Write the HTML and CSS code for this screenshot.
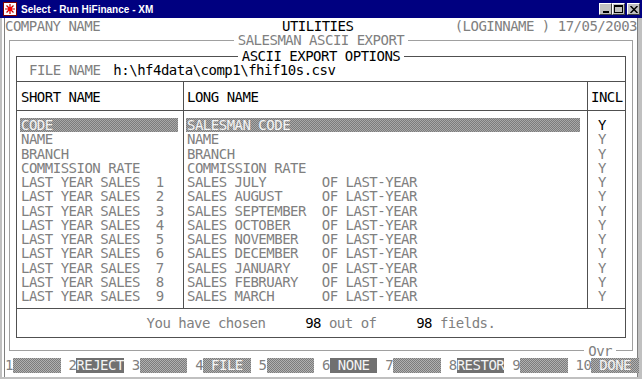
FILE: index.html
```html
<!DOCTYPE html>
<html lang="en">
<head>
  <meta charset="UTF-8">
  <title>Select - Run HiFinance - XM</title>
  <link rel="stylesheet" href="styles.css">
</head>
<body>
  <div class="window">
    <!-- Barre de titre -->
    <div class="titlebar">
      <svg class="app-icon" width="14" height="14" viewBox="0 0 14 14">
        <rect x="0.5" y="0.5" width="13" height="13" fill="#fff" stroke="#800000"/>
        <path d="M7 2v10M2 7h10M3.5 3.5l7 7M10.5 3.5l-7 7" stroke="#c00000" stroke-width="1.2"/>
        <rect x="5" y="5" width="4" height="4" fill="#ff0000"/>
      </svg>
      <span class="title">Select - Run HiFinance - XM</span>
      <div class="controls">
        <span class="ctl"><svg width="8" height="7" viewBox="0 0 8 7"><rect x="1" y="5" width="6" height="2" fill="#000"/></svg></span>
        <span class="ctl"><svg width="9" height="8" viewBox="0 0 9 8"><rect x="0.5" y="0.5" width="8" height="7" fill="none" stroke="#000"/><rect x="0" y="0" width="9" height="2" fill="#000"/></svg></span>
        <span class="ctl ctl-close"><svg width="8" height="7" viewBox="0 0 8 7"><path d="M0.5 0l7 7M7.5 0l-7 7" stroke="#000" stroke-width="1.5"/></svg></span>
      </div>
    </div>

    <!-- Ecran terminal -->
    <div class="screen">
      <div class="topline">
        <span class="dim">COMPANY NAME</span>
        <span class="ink">UTILITIES</span>
        <span class="dim right">(LOGINNAME ) 17/05/2003</span>
      </div>

      <fieldset class="outer">
        <legend class="dim">SALESMAN ASCII EXPORT</legend>

        <fieldset class="inner">
          <legend class="ink">ASCII EXPORT OPTIONS</legend>

          <div class="file-row">
            <span class="dim">FILE NAME</span>
            <span class="ink file-path">h:\hf4data\comp1\fhif10s.csv</span>
          </div>

          <div class="cols">
            <div class="col col-short">
              <div class="col-head ink">SHORT NAME</div>
              <div class="col-body dim">
                <div class="cell sel">CODE</div>
                <div class="cell">NAME</div>
                <div class="cell">BRANCH</div>
                <div class="cell">COMMISSION RATE</div>
                <div class="cell">LAST YEAR SALES  1</div>
                <div class="cell">LAST YEAR SALES  2</div>
                <div class="cell">LAST YEAR SALES  3</div>
                <div class="cell">LAST YEAR SALES  4</div>
                <div class="cell">LAST YEAR SALES  5</div>
                <div class="cell">LAST YEAR SALES  6</div>
                <div class="cell">LAST YEAR SALES  7</div>
                <div class="cell">LAST YEAR SALES  8</div>
                <div class="cell">LAST YEAR SALES  9</div>
              </div>
            </div>
            <div class="col col-long">
              <div class="col-head ink">LONG NAME</div>
              <div class="col-body dim">
                <div class="cell sel">SALESMAN CODE</div>
                <div class="cell">NAME</div>
                <div class="cell">BRANCH</div>
                <div class="cell">COMMISSION RATE</div>
                <div class="cell">SALES JULY       OF LAST-YEAR</div>
                <div class="cell">SALES AUGUST     OF LAST-YEAR</div>
                <div class="cell">SALES SEPTEMBER  OF LAST-YEAR</div>
                <div class="cell">SALES OCTOBER    OF LAST-YEAR</div>
                <div class="cell">SALES NOVEMBER   OF LAST-YEAR</div>
                <div class="cell">SALES DECEMBER   OF LAST-YEAR</div>
                <div class="cell">SALES JANUARY    OF LAST-YEAR</div>
                <div class="cell">SALES FEBRUARY   OF LAST-YEAR</div>
                <div class="cell">SALES MARCH      OF LAST-YEAR</div>
              </div>
            </div>
            <div class="col col-incl">
              <div class="col-head ink">INCL</div>
              <div class="col-body">
                <div class="cell ink"> Y</div>
                <div class="cell dim"> Y</div>
                <div class="cell dim"> Y</div>
                <div class="cell dim"> Y</div>
                <div class="cell dim"> Y</div>
                <div class="cell dim"> Y</div>
                <div class="cell dim"> Y</div>
                <div class="cell dim"> Y</div>
                <div class="cell dim"> Y</div>
                <div class="cell dim"> Y</div>
                <div class="cell dim"> Y</div>
                <div class="cell dim"> Y</div>
                <div class="cell dim"> Y</div>
              </div>
            </div>
          </div>

          <div class="summary"><span class="dim">You have chosen     </span><span class="ink">98</span><span class="dim"> out of     </span><span class="ink">98</span><span class="dim"> fields.</span></div>
        </fieldset>

        <span class="ovr dim">Ovr</span>
      </fieldset>

      <!-- Touches de fonction -->
      <div class="fkeys">
        <div class="fkey"><span class="num">1</span><span class="lbl">      </span></div>
        <div class="fkey"><span class="num">2</span><span class="lbl on">REJECT</span></div>
        <div class="fkey"><span class="num">3</span><span class="lbl">      </span></div>
        <div class="fkey"><span class="num">4</span><span class="lbl"> FILE </span></div>
        <div class="fkey"><span class="num">5</span><span class="lbl">      </span></div>
        <div class="fkey"><span class="num">6</span><span class="lbl on"> NONE </span></div>
        <div class="fkey"><span class="num">7</span><span class="lbl">      </span></div>
        <div class="fkey"><span class="num">8</span><span class="lbl on">RESTOR</span></div>
        <div class="fkey"><span class="num">9</span><span class="lbl">      </span></div>
        <div class="fkey"><span class="num">10</span><span class="lbl"> DONE </span></div>
      </div>
    </div>
  </div>
</body>
</html>
```

FILE: styles.css
```css
/* Style global */
body, html {
  margin: 0;
  padding: 0;
  background: #c0c0c0;
  overflow: hidden;
}

.window {
  width: 642px;
  height: 379px;
  background: #c0c0c0;
  display: flex;
  flex-direction: column;
}

/* Barre de titre */
.titlebar {
  height: 18px;
  background: #000080;
  display: flex;
  align-items: center;
  padding: 0 2px 0 3px;
  box-sizing: border-box;
}

.app-icon {
  margin-right: 4px;
}

.title {
  color: #fff;
  font-family: "Liberation Sans", Arial, sans-serif;
  font-weight: bold;
  font-size: 10px;
  flex: 1;
}

.controls {
  display: flex;
}

.ctl {
  width: 13px;
  height: 12px;
  background: #c0c0c0;
  border: 1px solid;
  border-color: #fff #404040 #404040 #fff;
  display: flex;
  align-items: center;
  justify-content: center;
  box-sizing: border-box;
}

.ctl-close {
  margin-left: 2px;
}

/* Ecran */
.screen {
  flex: 1;
  margin: 0 5px 2px 5px;
  background: #fff;
  font-family: "DejaVu Sans Mono", monospace;
  font-size: 14px;
  letter-spacing: -0.5px;
  line-height: 14px;
  color: #000;
  box-shadow: -1px 0 0 #808080, -3px 0 0 #fff, 1px 0 0 #808080;
}

.screen span,
.cell,
legend {
  white-space: pre;
}

.dim {
  color: #808080;
}

.ink {
  color: #000;
}

.topline {
  display: grid;
  grid-template-columns: 277px auto 1fr;
  padding-top: 1px;
  height: 14px;
}

.right {
  text-align: right;
}

/* Cadres */
fieldset {
  margin: 0;
  padding: 0;
  min-width: 0;
}

legend {
  margin: 0 auto;
  padding: 0 4px;
  line-height: 14px;
}

.outer {
  position: relative;
  margin: 0 4px;
  border: 1px solid #a0a0a0;
  padding-bottom: 12px;
}

.inner {
  margin: 2px 6px 0 6px;
  border: 1px solid #505050;
}

.file-row {
  display: flex;
  height: 19px;
  padding: 0 0 0 12px;
  box-sizing: border-box;
  border-bottom: 1px solid #505050;
}

.file-path {
  margin-left: 13px;
}

/* Colonnes */
.cols {
  display: grid;
  grid-template-columns: 166px 404px 1fr;
  border-bottom: 1px solid #505050;
}

.col-long, .col-incl {
  border-left: 1px solid #505050;
}

.col-head {
  height: 29px;
  padding: 8px 0 0 4px;
  box-sizing: border-box;
  border-bottom: 1px solid #505050;
}

.col-body {
  height: 197px;
  padding-top: 7px;
  box-sizing: border-box;
}

.col-long .col-head,
.col-long .cell,
.col-incl .col-head,
.col-incl .cell {
  padding-left: 3px;
}

.col-incl .cell {
  padding-left: 2px;
}

.cell {
  line-height: 14.25px;
  height: 14.25px;
  padding-left: 4px;
}

.cell.sel {
  color: #f4f4f4;
  background: repeating-conic-gradient(#7c7c7c 0 25%, #a8a8a8 0 50%) 0 0 / 2px 2px;
  margin-left: 3px;
  padding-left: 1px;
  width: 158px;
  box-sizing: border-box;
}

.col-long .cell.sel {
  margin-left: 2px;
  padding-left: 1px;
  width: 394px;
}

.summary {
  height: 28px;
  padding-top: 7px;
  box-sizing: border-box;
  text-align: center;
}

.ovr {
  position: absolute;
  right: 16px;
  bottom: -8px;
  background: #fff;
  padding: 0 4px;
  line-height: 14px;
}

/* Touches de fonction */
.fkeys {
  display: grid;
  grid-template-columns: repeat(10, 63.4px);
  margin-top: 7px;
  height: 15px;
  line-height: 15px;
}

.fkey {
  display: flex;
}

.num {
  color: #808080;
}

.lbl {
  color: #f4f4f4;
  background: repeating-conic-gradient(#7c7c7c 0 25%, #b0b0b0 0 50%) 0 0 / 2px 2px;
}

.lbl.on {
  background: #707070;
}
```
